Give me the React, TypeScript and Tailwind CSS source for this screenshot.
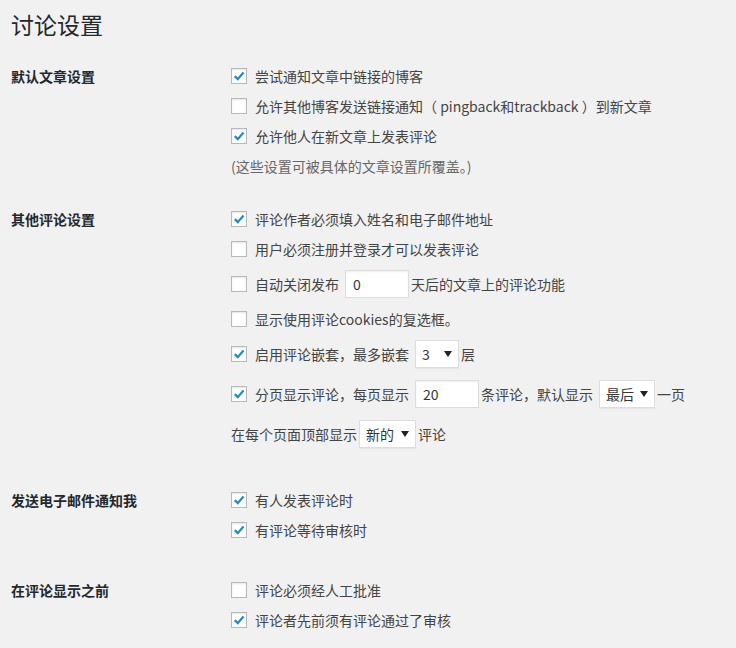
import React from 'react';

const Check: React.FC<{ checked?: boolean }> = ({ checked }) => (
  <span className="w-4 h-4 shrink-0 bg-white border border-[#b4b9be] shadow-[inset_0_1px_2px_rgba(0,0,0,0.1)] flex items-center justify-center mr-2">
    {checked && (
      <svg width="14" height="14" viewBox="0 0 16 16" className="block">
        <path d="M3.2 8.2 L6.6 11.6 L13.2 4" fill="none" stroke="#1e8cbe" strokeWidth="2.6" strokeLinecap="butt" strokeLinejoin="miter" />
      </svg>
    )}
  </span>
);

const TextBox: React.FC<{ value: string; w: string }> = ({ value, w }) => (
  <span className={`${w} h-[28px] mx-[2px] bg-white border border-[#ddd] shadow-[inset_0_1px_2px_rgba(0,0,0,0.07)] text-[#32373c] flex items-center pl-[7px]`}>
    {value}
  </span>
);

const Select: React.FC<{ value: string; w: string }> = ({ value, w }) => (
  <span className={`${w} h-[28px] mx-[2px] bg-white border border-[#ddd] shadow-[0_1px_1px_rgba(0,0,0,0.04)] text-[#32373c] flex items-center justify-between pl-[6px] pr-[6px]`}>
    <span>{value}</span>
    <svg width="8" height="6" viewBox="0 0 8 6" className="block">
      <path d="M0 0 H8 L4 6 Z" fill="#222" />
    </svg>
  </span>
);

const Row: React.FC<{ h?: string; children: React.ReactNode }> = ({ h = 'h-[30px]', children }) => (
  <div className={`${h} flex items-center`}>{children}</div>
);

const Section: React.FC<{ label: string; mt: string; children: React.ReactNode }> = ({ label, mt, children }) => (
  <div className={`flex ${mt}`}>
    <div className="w-[231px] shrink-0 pl-[11px]">
      <div className="h-[30px] flex items-center font-semibold text-[#23282d]">{label}</div>
    </div>
    <div className="flex flex-col">{children}</div>
  </div>
);

export default function App() {
  return (
    <div className="min-h-[648px] bg-[#f1f1f1] font-['Noto_Sans_CJK_SC',sans-serif] text-[14px] leading-[20px] text-[#444]">
      <div className="pl-[11px] pt-[10px]">
        <h1 className="text-[23px] leading-[29px] text-[#23282d] font-normal">讨论设置</h1>
      </div>

      <Section label="默认文章设置" mt="mt-[22px]">
        <Row><Check checked />尝试通知文章中链接的博客</Row>
        <Row><Check />允许其他博客发送链接通知（ pingback和trackback ）到新文章</Row>
        <Row><Check checked />允许他人在新文章上发表评论</Row>
        <Row><span className="text-[#666]">(这些设置可被具体的文章设置所覆盖。)</span></Row>
      </Section>

      <Section label="其他评论设置" mt="mt-[23px]">
        <Row><Check checked />评论作者必须填入姓名和电子邮件地址</Row>
        <Row><Check />用户必须注册并登录才可以发表评论</Row>
        <Row h="h-[40px]">
          <Check />自动关闭发布<span className="w-[4px]" />
          <TextBox value="0" w="w-[64px]" />天后的文章上的评论功能
        </Row>
        <Row><Check />显示使用评论cookies的复选框。</Row>
        <Row h="h-[40px]">
          <Check checked />启用评论嵌套，最多嵌套<span className="w-[4px]" />
          <Select value="3" w="w-[44px]" />层
        </Row>
        <Row h="h-[40px]">
          <Check checked />分页显示评论，每页显示<span className="w-[4px]" />
          <TextBox value="20" w="w-[64px]" />条评论，默认显示<span className="w-[4px]" />
          <Select value="最后" w="w-[56px]" />一页
        </Row>
        <Row h="h-[40px]">
          在每个页面顶部显示
          <Select value="新的" w="w-[57px]" />评论
        </Row>
      </Section>

      <Section label="发送电子邮件通知我" mt="mt-[31px]">
        <Row><Check checked />有人发表评论时</Row>
        <Row><Check checked />有评论等待审核时</Row>
      </Section>

      <Section label="在评论显示之前" mt="mt-[30px]">
        <Row><Check />评论必须经人工批准</Row>
        <Row><Check checked />评论者先前须有评论通过了审核</Row>
      </Section>
    </div>
  );
}
